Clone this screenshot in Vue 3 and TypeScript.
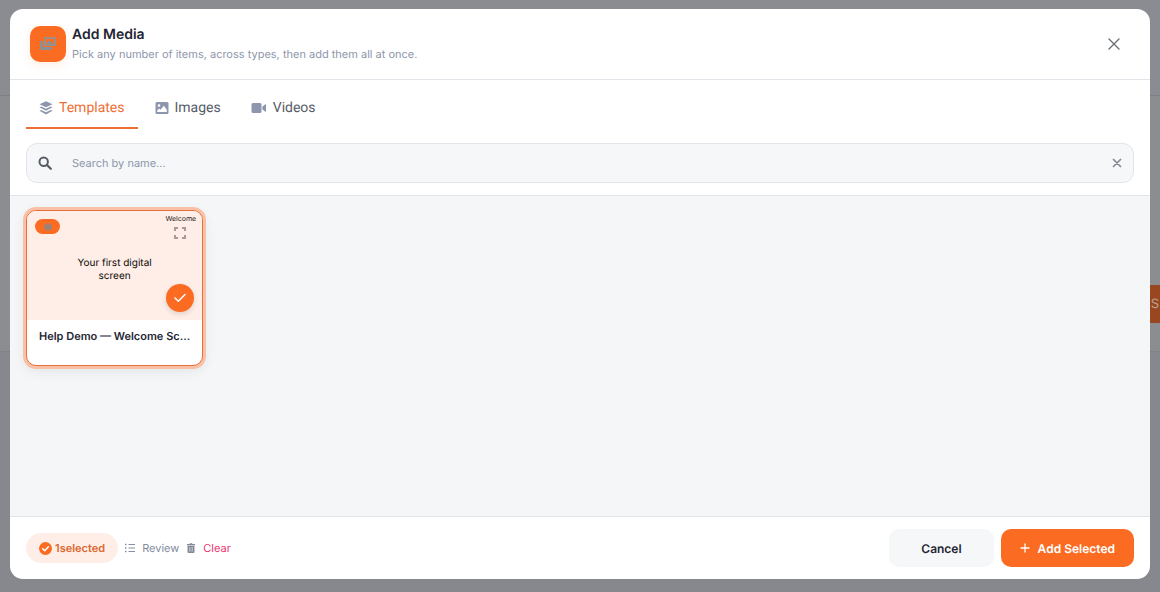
<script setup lang="ts">
import { ref } from 'vue'

type TabId = 'templates' | 'images' | 'videos'

interface Tab {
  id: TabId
  label: string
}

interface MediaItem {
  id: number
  name: string
}

const tabs: Tab[] = [
  { id: 'templates', label: 'Templates' },
  { id: 'images', label: 'Images' },
  { id: 'videos', label: 'Videos' },
]
const items: MediaItem[] = [{ id: 1, name: 'Help Demo — Welcome Sc...' }]

const activeTab = ref<TabId>('templates')
const query = ref('')
const selected = ref<number[]>([1])

function toggle(id: number): void {
  selected.value = selected.value.includes(id)
    ? selected.value.filter((other) => other !== id)
    : [...selected.value, id]
}
</script>

<template>
  <div class="screen">
    <div class="behind" aria-hidden="true">
      <div class="behind-top"></div>
      <div class="behind-main"><span class="behind-save">S</span></div>
    </div>

    <section class="modal" role="dialog" aria-modal="true" aria-labelledby="modal-title">
      <header class="head">
        <span class="logo">
          <svg width="18" height="16" viewBox="0 0 18 16">
            <path d="M1 5h3v6h9v3H1z" fill="#8d8f94" />
            <path fill-rule="evenodd" d="M5 1h12v9H5zM7 3v5h8V3z" fill="#9c8f88" />
            <path d="M7.500 8l2.500-4 2 2.500 1-1 1.500 2.500z" fill="#8d8f94" />
          </svg>
        </span>
        <div class="titles">
          <h1 id="modal-title">Add Media</h1>
          <p>Pick any number of items, across types, then add them all at once.</p>
        </div>
        <button class="close" type="button" aria-label="Close">
          <svg width="12" height="12" viewBox="0 0 12 12"><path d="M1 1l10 10M11 1L1 11" fill="none" stroke="#6c6f75" stroke-width="1.400" stroke-linecap="round" /></svg>
        </button>
      </header>

      <nav class="tabs" role="tablist">
        <button
          v-for="tab in tabs"
          :key="tab.id"
          type="button"
          role="tab"
          class="tab"
          :class="{ active: tab.id === activeTab }"
          :aria-selected="tab.id === activeTab"
          @click="activeTab = tab.id"
        >
          <svg v-if="tab.id === 'templates'" width="14" height="14" viewBox="0 0 14 14" fill="#8e96ae">
            <path d="M7 .3l6.500 3L7 6.300.5 3.300z" />
            <path d="M.5 6.300l1.800-.8L7 7.700l4.700-2.200 1.800.8L7 9.800z" />
            <path d="M.5 9.800L2.300 9 7 11.200 11.700 9l1.800.8-6.500 3.700z" />
          </svg>
          <svg v-else-if="tab.id === 'images'" width="14" height="14" viewBox="0 0 14 14">
            <rect x=".5" y="1" width="13" height="12" rx="1.500" fill="#8e96ae" />
            <circle cx="4" cy="4.500" r="1.300" fill="#fff" />
            <path d="M2.200 11V9.500l2-2 1.300 1.300 3.300-4 3 4V11z" fill="#fff" />
          </svg>
          <svg v-else width="16" height="14" viewBox="0 0 16 14" fill="#8e96ae">
            <rect x=".5" y="2" width="10" height="10" rx="1.500" />
            <path d="M11.300 5.800l3-2.500q.7-.3.700.4v6.600q0 .7-.7.4l-3-2.500z" />
          </svg>
          <span>{{ tab.label }}</span>
        </button>
      </nav>

      <div class="search-row">
        <div class="search">
          <svg width="14" height="14" viewBox="0 0 14 14"><circle cx="5.700" cy="5.700" r="4.200" fill="none" stroke="#565b64" stroke-width="2" /><path d="M9 9l3.800 3.800" stroke="#565b64" stroke-width="2.200" stroke-linecap="round" /></svg>
          <input v-model="query" type="text" placeholder="Search by name..." aria-label="Search by name" />
          <button type="button" aria-label="Clear search" @click="query = ''">
            <svg width="10" height="10" viewBox="0 0 10 10"><path d="M1.500 1.500l7 7M8.500 1.500l-7 7" fill="none" stroke="#858990" stroke-width="1.700" stroke-linecap="round" /></svg>
          </button>
        </div>
      </div>

      <main class="body">
        <article
          v-for="item in items"
          :key="item.id"
          class="card"
          :class="{ chosen: selected.includes(item.id) }"
          @click="toggle(item.id)"
        >
          <div class="thumb">
            <span class="badge">
              <svg width="10" height="8" viewBox="0 0 10 8"><path d="M5 0l4 2v4L5 8 1 6V2z" fill="#a1806f" /></svg>
            </span>
            <span class="welcome">Welcome</span>
            <button class="expand" type="button" aria-label="Preview">
              <svg width="12" height="12" viewBox="0 0 12 12"><path d="M1 4V1h3M8 1h3v3M11 8v3H8M4 11H1V8" fill="none" stroke="#a59b9a" stroke-width="2" /></svg>
            </button>
            <p class="caption">Your first digital screen</p>
            <span v-if="selected.includes(item.id)" class="tick">
              <svg width="12" height="10" viewBox="0 0 12 10"><path d="M1 5l3.300 3.300L11 1.500" fill="none" stroke="#fff" stroke-width="1.500" stroke-linecap="round" stroke-linejoin="round" /></svg>
            </span>
          </div>
          <h2 class="name">{{ item.name }}</h2>
        </article>
      </main>

      <footer class="foot">
        <span class="count">
          <svg width="13" height="13" viewBox="0 0 13 13"><circle cx="6.500" cy="6.500" r="6.500" fill="#fb6c22" /><path d="M3.700 6.700l2 2 3.700-3.900" fill="none" stroke="#fff" stroke-width="1.500" stroke-linecap="round" stroke-linejoin="round" /></svg>
          <span>{{ selected.length }}selected</span>
        </span>
        <button class="link" type="button">
          <svg width="10" height="10" viewBox="0 0 10 10"><path d="M3.500 1.500H10M3.500 5H10M3.500 8.500H10" stroke="#878fa5" stroke-width="1" /><path d="M0 1.500h1.500M0 5h1.500M0 8.500h1.500" stroke="#878fa5" stroke-width="1.500" /></svg>
          <span>Review</span>
        </button>
        <button class="link clear" type="button" @click="selected = []">
          <svg width="10" height="10" viewBox="0 0 10 10"><path d="M1 1h2.500l.5-.8h2l.5.800H9v1.200H1z" fill="#858995" /><path d="M1.500 2.800h7v6.200q0 1-1 1h-5q-1 0-1-1z" fill="#858995" /><path d="M3.500 4v4.700M5 4v4.700M6.500 4v4.700" stroke="#d5d8df" stroke-width=".6" /></svg>
          <span>Clear</span>
        </button>
        <div class="actions">
          <button class="btn cancel" type="button">Cancel</button>
          <button class="btn add" type="button">
            <svg width="10" height="10" viewBox="0 0 10 10"><path d="M5 1v8M1 5h8" stroke="#fff" stroke-width="1.300" stroke-linecap="round" /></svg>
            <span>Add Selected</span>
          </button>
        </div>
      </footer>
    </section>
  </div>
</template>

<style>
body {
  background: #898a8f;
}
</style>

<style scoped>
* {
  box-sizing: border-box;
}
.screen {
  position: relative;
  display: flex;
  min-height: 100vh;
  padding: 9px 10px 13px;
  overflow: hidden;
  font-family: Inter, "Liberation Sans", sans-serif;
  text-rendering: geometricPrecision;
  color: #1f2633;
}
button {
  margin: 0;
  padding: 0;
  border: 0;
  background: none;
  font: inherit;
  color: inherit;
  text-rendering: inherit;
  cursor: pointer;
}
svg {
  display: block;
  flex: none;
}
h1, h2, p {
  margin: 0;
}
.behind {
  position: absolute;
  inset: 0;
  background: #87888e;
}
.behind-top {
  height: 96px;
  border-bottom: 1px solid #7f8085;
  background: #8b8c91;
}
.behind-main {
  display: flex;
  justify-content: flex-end;
  height: 256px;
  padding-top: 189px;
  border-bottom: 1px solid #818287;
  background: #8b8d91;
}
.behind-save {
  width: 10px;
  height: 38px;
  background: #984720;
  color: #b9a196;
  font-size: 13px;
  line-height: 38px;
  text-align: center;
}
.modal {
  position: relative;
  display: flex;
  flex: 1;
  flex-direction: column;
  min-width: 0;
  overflow: hidden;
  border-radius: 13px;
  background: #fff;
}
.head {
  display: flex;
  align-items: center;
  gap: 6px;
  height: 71px;
  padding: 0 24px 0 20px;
  border-bottom: 1px solid #e1e4e8;
}
.logo {
  display: grid;
  place-items: center;
  width: 36px;
  height: 36px;
  border-radius: 10px;
  background: #fb6c22;
  box-shadow: 0 3px 8px #fb6c2220;
}
.titles {
  flex: 1;
}
.titles h1 {
  font-size: 14px;
  font-weight: 600;
  line-height: 20px;
}
.titles p {
  font-size: 11px;
  line-height: 18px;
  color: #8e96ab;
}
.close {
  display: grid;
  place-items: center;
  width: 24px;
  height: 24px;
}
.tabs {
  display: flex;
  gap: 4px;
  padding: 5px 16px 0;
}
.tab {
  display: flex;
  align-items: center;
  gap: 6px;
  height: 44px;
  padding: 3px 13px 0;
  border-bottom: 2px solid transparent;
  font-family: Roboto, Inter, sans-serif;
  font-size: 14px;
  font-weight: 400;
  color: #565c67;
}
.tab.active {
  border-color: #ee6f34;
  color: #ee6f34;
}
.search-row {
  padding: 14px 16px 12px;
  border-bottom: 1px solid #e1e4e8;
}
.search {
  display: flex;
  align-items: center;
  gap: 20px;
  height: 40px;
  padding: 0 11px;
  border: 1px solid #e1e5e9;
  border-radius: 11px;
  background: #f5f7f9;
}
.search input {
  flex: 1;
  min-width: 0;
  padding: 0;
  border: 0;
  outline: 0;
  background: none;
  font: 11px/20px Inter, "Liberation Sans", sans-serif;
  text-rendering: inherit;
  color: #1f2633;
}
.search input::placeholder {
  color: #8e96ab;
  opacity: 1;
}
.body {
  display: grid;
  flex: 1;
  grid-template-columns: repeat(auto-fill, minmax(168px, 1fr));
  align-content: start;
  gap: 9px;
  padding: 14px 16px;
  background: #f5f6f8;
}
.card {
  overflow: hidden;
  border: 1px solid #e1e4e8;
  border-radius: 10px;
  background: #fff;
  cursor: pointer;
}
.card.chosen {
  border-color: #e96f38;
  box-shadow: 0 0 0 3px #f8c0a6, 0 4px 14px #1f26331a;
}
.thumb {
  position: relative;
  display: flex;
  align-items: center;
  justify-content: center;
  height: 109px;
  padding-top: 8px;
  background: #feeee7;
}
.caption {
  width: 84px;
  font-size: 10px;
  line-height: 13px;
  text-align: center;
  color: #0c0808;
}
.badge {
  position: absolute;
  top: 8px;
  left: 8px;
  display: grid;
  place-items: center;
  width: 25px;
  height: 15px;
  border-radius: 8px;
  background: #fb6c22;
}
.welcome {
  position: absolute;
  top: 4px;
  right: 6px;
  font-size: 7px;
  line-height: 8px;
  color: #2b2220;
}
.expand {
  position: absolute;
  top: 16px;
  right: 16px;
}
.tick {
  position: absolute;
  right: 8px;
  bottom: 8px;
  display: grid;
  place-items: center;
  width: 28px;
  height: 28px;
  border-radius: 50%;
  background: #fb6c22;
  box-shadow: 0 2px 5px #1f263326;
}
.name {
  padding: 8px 12px 21px;
  font-size: 11px;
  font-weight: 600;
  line-height: 16px;
  white-space: nowrap;
}
.foot {
  display: flex;
  align-items: center;
  gap: 7px;
  height: 63px;
  padding: 0 16px;
  border-top: 1px solid #e1e4e8;
  font-size: 11px;
}
.count {
  display: flex;
  align-items: center;
  gap: 3px;
  height: 30px;
  padding: 0 13px;
  border-radius: 15px;
  background: #feeee7;
  font-weight: 600;
  color: #dc682f;
}
.link {
  display: flex;
  align-items: center;
  gap: 7px;
  color: #858da1;
}
.link.clear > span {
  color: #e93570;
}
.actions {
  display: flex;
  gap: 7px;
  margin-left: auto;
}
.btn {
  display: flex;
  align-items: center;
  justify-content: center;
  gap: 8px;
  height: 38px;
  border-radius: 10px;
  font-size: 12px;
  font-weight: 600;
}
.cancel {
  padding: 0 32px;
  background: #f6f7f9;
}
.add {
  padding: 0 19px;
  background: #fb6c22;
  color: #fff;
}
</style>
